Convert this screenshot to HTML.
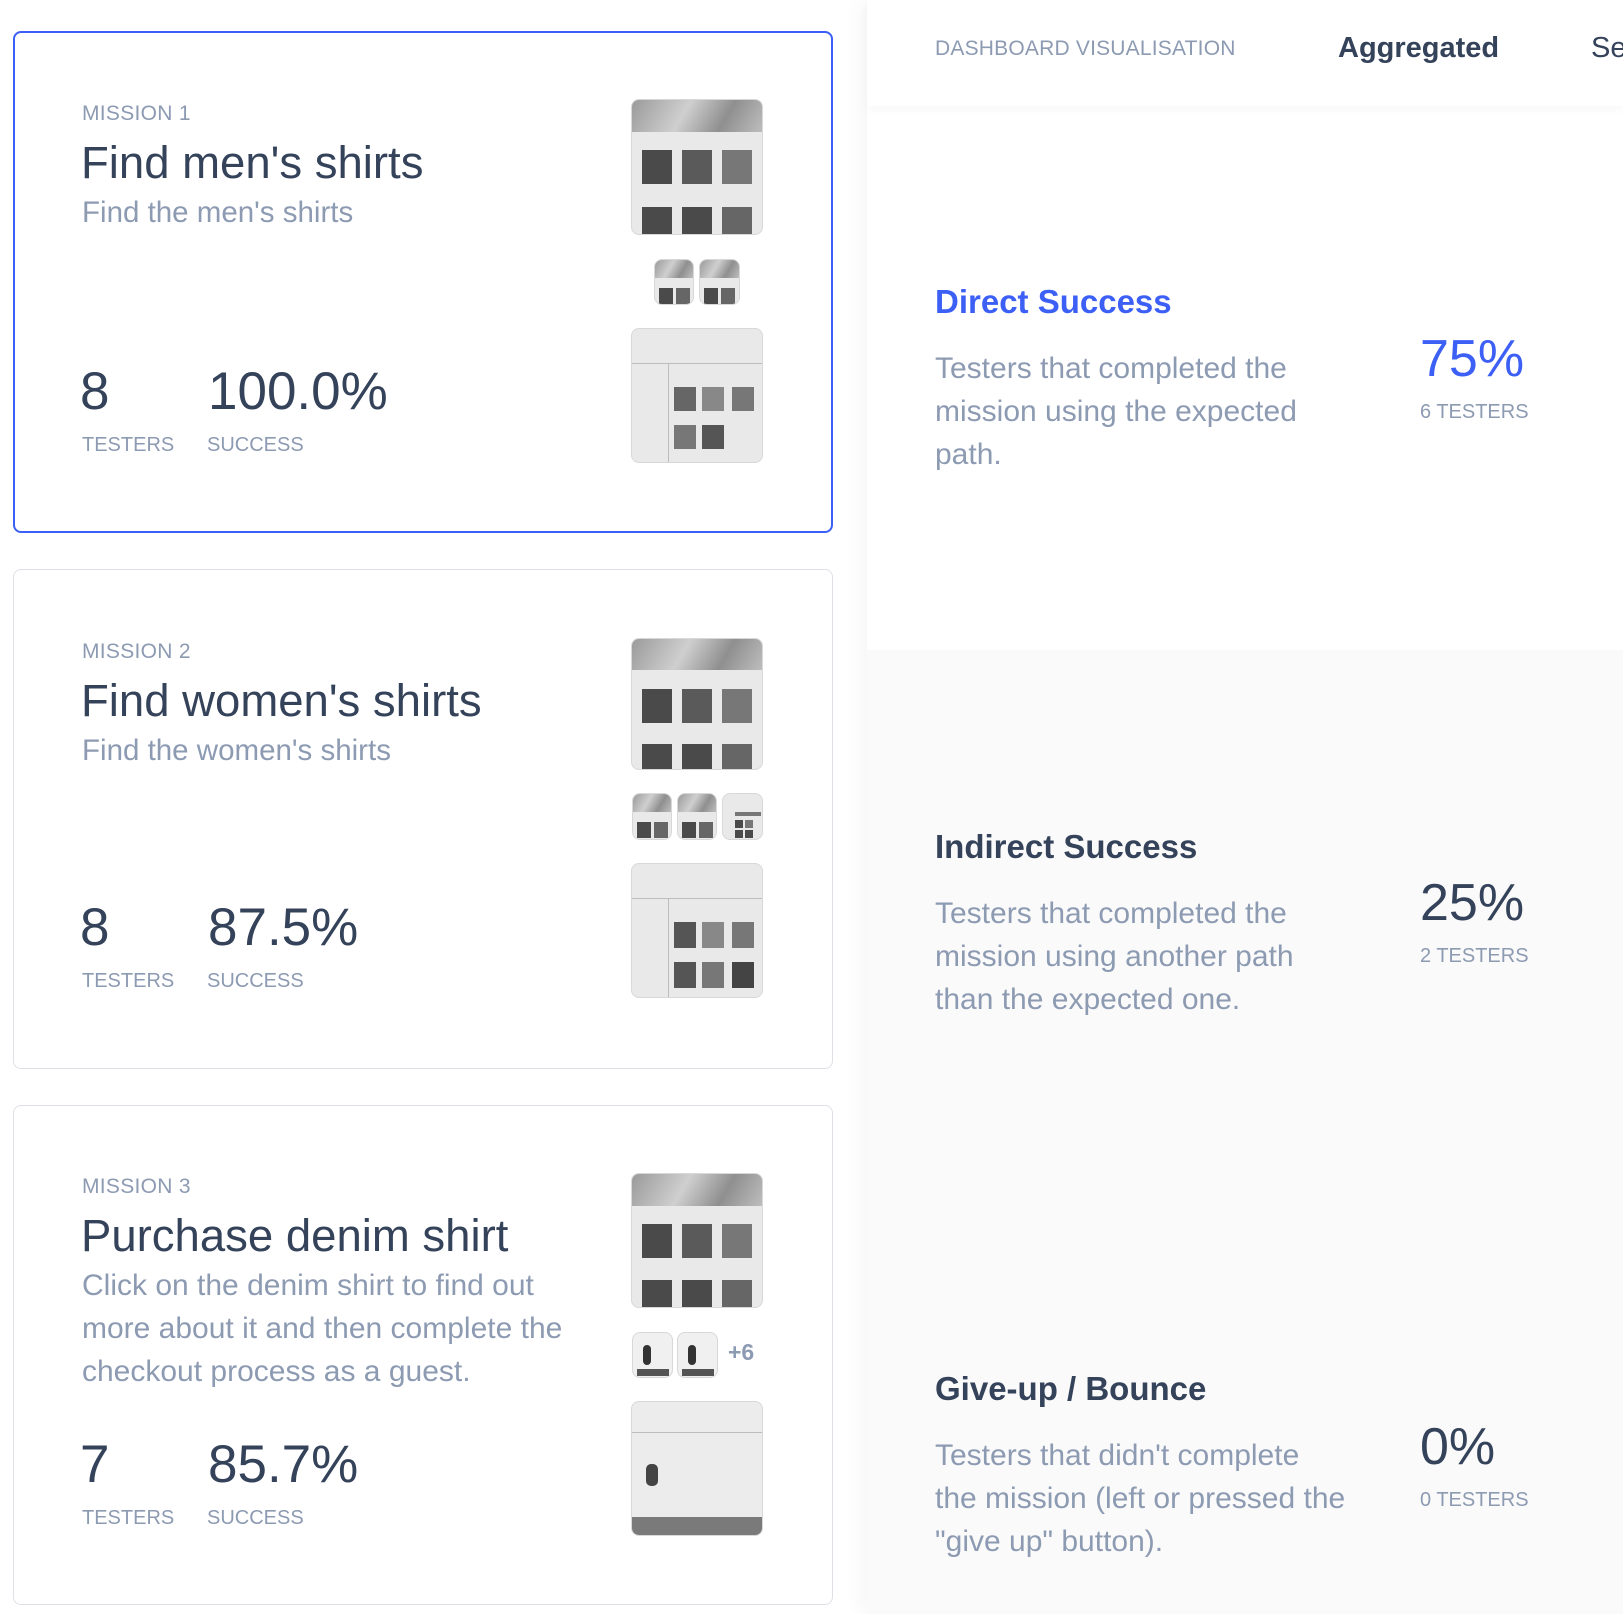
<!DOCTYPE html>
<html><head><meta charset="utf-8"><style>
*{margin:0;padding:0;box-sizing:border-box}
body{width:1623px;height:1614px;overflow:hidden;background:#fff;font-family:"Liberation Sans",sans-serif;position:relative}
.abs{position:absolute;white-space:nowrap;line-height:1}
.card{position:absolute;left:13px;width:820px;border:1.5px solid #dde0e5;border-radius:8px;background:#fff}
.card.sel{border:2px solid #3c5ff5}
.lbl{color:#8c9ab2;font-size:21px;letter-spacing:0.3px}
.ttl{color:#34425a;font-size:45.5px}
.sub{color:#8c9ab2;font-size:29.5px}
.num{color:#34425a;font-size:53px}
.cap{color:#8c9ab2;font-size:20px}
.th{position:absolute;border:1.5px solid #d8d8d8;border-radius:8px;background:#e9e9e9;overflow:hidden}
.ban{position:absolute;left:0;right:0;top:0;height:24%;background:linear-gradient(120deg,#9a9a9a,#cfcfcf 40%,#8f8f8f 70%,#bdbdbd)}
.sq{position:absolute;background:#4a4a4a}
.ln{position:absolute;background:#bdbdbd;height:1px}
.panel{position:absolute;left:867px;top:0;width:756px;height:1614px;background:#fafafa;box-shadow:-8px 0 18px rgba(0,0,0,0.035)}
.h2{color:#34425a;font-size:33px;font-weight:bold}
.desc{color:#8c9ab2;font-size:30px;line-height:43px;white-space:nowrap;position:absolute}
.pct{color:#34425a;font-size:52px}
.tst{color:#8c9ab2;font-size:20px}
</style></head><body>

<div class="card sel" style="top:31px;height:502px"></div>
<div class="card" style="top:569px;height:500px"></div>
<div class="card" style="top:1105px;height:500px"></div>

<!-- card 1 -->
<div class="abs lbl" style="left:82px;top:103px">MISSION 1</div>
<div class="abs ttl" style="left:81px;top:140px">Find men's shirts</div>
<div class="abs sub" style="left:82px;top:198px">Find the men's shirts</div>
<div class="abs num" style="left:80px;top:365px">8</div>
<div class="abs num" style="left:208px;top:365px">100.0%</div>
<div class="abs cap" style="left:82px;top:435px">TESTERS</div>
<div class="abs cap" style="left:207px;top:435px">SUCCESS</div>

<!-- card 2 -->
<div class="abs lbl" style="left:82px;top:641px">MISSION 2</div>
<div class="abs ttl" style="left:81px;top:678px">Find women's shirts</div>
<div class="abs sub" style="left:82px;top:736px">Find the women's shirts</div>
<div class="abs num" style="left:80px;top:901px">8</div>
<div class="abs num" style="left:208px;top:901px">87.5%</div>
<div class="abs cap" style="left:82px;top:971px">TESTERS</div>
<div class="abs cap" style="left:207px;top:971px">SUCCESS</div>

<!-- card 3 -->
<div class="abs lbl" style="left:82px;top:1176px">MISSION 3</div>
<div class="abs ttl" style="left:81px;top:1213px">Purchase denim shirt</div>
<div class="desc" style="left:82px;top:1264px;font-size:30px">Click on the denim shirt to find out<br>more about it and then complete the<br>checkout process as a guest.</div>
<div class="abs num" style="left:80px;top:1438px">7</div>
<div class="abs num" style="left:208px;top:1438px">85.7%</div>
<div class="abs cap" style="left:82px;top:1508px">TESTERS</div>
<div class="abs cap" style="left:207px;top:1508px">SUCCESS</div>

<!-- thumbs -->
<div class="th" style="left:631px;top:99px;width:132px;height:136px"><div class="ban"></div>
<div class="sq" style="left:10px;top:50px;width:30px;height:34px"></div><div class="sq" style="left:50px;top:50px;width:30px;height:34px;background:#5a5a5a"></div><div class="sq" style="left:90px;top:50px;width:30px;height:34px;background:#777"></div>
<div class="sq" style="left:10px;top:107px;width:30px;height:30px"></div><div class="sq" style="left:50px;top:107px;width:30px;height:30px"></div><div class="sq" style="left:90px;top:107px;width:30px;height:30px;background:#666"></div></div>
<div class="th" style="left:654px;top:259px;width:40px;height:46px"><div class="ban" style="height:40%"></div><div class="sq" style="left:4px;top:28px;width:14px;height:16px"></div><div class="sq" style="left:21px;top:28px;width:14px;height:16px;background:#666"></div></div>
<div class="th" style="left:699px;top:259px;width:41px;height:46px"><div class="ban" style="height:40%"></div><div class="sq" style="left:4px;top:28px;width:14px;height:16px"></div><div class="sq" style="left:21px;top:28px;width:14px;height:16px;background:#666"></div></div>
<div class="th" style="left:631px;top:328px;width:132px;height:135px"><div class="ln" style="left:0;right:0;top:34px"></div><div class="ln" style="left:36px;top:34px;width:1px;height:100px"></div>
<div class="sq" style="left:42px;top:58px;width:22px;height:24px;background:#666"></div><div class="sq" style="left:70px;top:58px;width:22px;height:24px;background:#888"></div><div class="sq" style="left:100px;top:58px;width:22px;height:24px;background:#777"></div>
<div class="sq" style="left:42px;top:96px;width:22px;height:24px;background:#777"></div><div class="sq" style="left:70px;top:96px;width:22px;height:24px;background:#555"></div></div>

<div class="th" style="left:631px;top:638px;width:132px;height:132px"><div class="ban"></div>
<div class="sq" style="left:10px;top:50px;width:30px;height:34px"></div><div class="sq" style="left:50px;top:50px;width:30px;height:34px;background:#5a5a5a"></div><div class="sq" style="left:90px;top:50px;width:30px;height:34px;background:#777"></div>
<div class="sq" style="left:10px;top:105px;width:30px;height:30px"></div><div class="sq" style="left:50px;top:105px;width:30px;height:30px"></div><div class="sq" style="left:90px;top:105px;width:30px;height:30px;background:#666"></div></div>
<div class="th" style="left:632px;top:793px;width:40px;height:47px"><div class="ban" style="height:40%"></div><div class="sq" style="left:4px;top:28px;width:14px;height:16px"></div><div class="sq" style="left:21px;top:28px;width:14px;height:16px;background:#666"></div></div>
<div class="th" style="left:677px;top:793px;width:40px;height:47px"><div class="ban" style="height:40%"></div><div class="sq" style="left:4px;top:28px;width:14px;height:16px"></div><div class="sq" style="left:21px;top:28px;width:14px;height:16px;background:#666"></div></div>
<div class="th" style="left:722px;top:793px;width:41px;height:47px"><div class="sq" style="left:12px;top:18px;width:26px;height:4px;background:#777"></div><div class="sq" style="left:12px;top:26px;width:8px;height:8px"></div><div class="sq" style="left:22px;top:26px;width:8px;height:8px;background:#777"></div><div class="sq" style="left:12px;top:36px;width:8px;height:8px"></div><div class="sq" style="left:22px;top:36px;width:8px;height:8px"></div></div>
<div class="th" style="left:631px;top:863px;width:132px;height:135px"><div class="ln" style="left:0;right:0;top:34px"></div><div class="ln" style="left:36px;top:34px;width:1px;height:100px"></div>
<div class="sq" style="left:42px;top:58px;width:22px;height:26px;background:#555"></div><div class="sq" style="left:70px;top:58px;width:22px;height:26px;background:#888"></div><div class="sq" style="left:100px;top:58px;width:22px;height:26px;background:#777"></div>
<div class="sq" style="left:42px;top:98px;width:22px;height:26px;background:#555"></div><div class="sq" style="left:70px;top:98px;width:22px;height:26px;background:#777"></div><div class="sq" style="left:100px;top:98px;width:22px;height:26px;background:#444"></div></div>

<div class="th" style="left:631px;top:1173px;width:132px;height:135px"><div class="ban"></div>
<div class="sq" style="left:10px;top:50px;width:30px;height:34px"></div><div class="sq" style="left:50px;top:50px;width:30px;height:34px;background:#5a5a5a"></div><div class="sq" style="left:90px;top:50px;width:30px;height:34px;background:#777"></div>
<div class="sq" style="left:10px;top:106px;width:30px;height:30px"></div><div class="sq" style="left:50px;top:106px;width:30px;height:30px"></div><div class="sq" style="left:90px;top:106px;width:30px;height:30px;background:#666"></div></div>
<div class="th" style="left:632px;top:1332px;width:41px;height:46px;background:#f0f0f0"><div class="sq" style="left:10px;top:12px;width:8px;height:20px;background:#333;border-radius:4px"></div><div class="sq" style="left:4px;top:36px;width:32px;height:7px;background:#555"></div></div>
<div class="th" style="left:677px;top:1332px;width:41px;height:46px;background:#f0f0f0"><div class="sq" style="left:10px;top:12px;width:8px;height:20px;background:#333;border-radius:4px"></div><div class="sq" style="left:4px;top:36px;width:32px;height:7px;background:#555"></div></div>
<div class="abs" style="left:728px;top:1341px;font-size:23px;font-weight:bold;color:#8c9ab2">+6</div>
<div class="th" style="left:631px;top:1401px;width:132px;height:135px;background:#ececec"><div class="ln" style="left:0;right:0;top:30px"></div><div class="sq" style="left:14px;top:62px;width:12px;height:22px;background:#444;border-radius:5px"></div><div class="sq" style="left:0;right:0;bottom:0;height:18px;background:#7a7a7a"></div></div>

<!-- right panel -->
<div class="panel"></div>
<div style="position:absolute;left:867px;top:0;width:756px;height:650px;background:#fff"></div>
<div style="position:absolute;left:867px;top:0;width:756px;height:106px;background:#fff;box-shadow:0 4px 10px rgba(0,0,0,0.03)"></div>
<div class="abs" style="left:935px;top:38px;font-size:21px;color:#8c9ab2;letter-spacing:0.2px">DASHBOARD VISUALISATION</div>
<div class="abs" style="left:1338px;top:34px;font-size:29px;font-weight:bold;color:#34425a">Aggregated</div>
<div class="abs" style="left:1591px;top:34px;font-size:29px;color:#34425a">Se</div>

<div class="abs h2" style="left:935px;top:285px;color:#3c5ff5">Direct Success</div>
<div class="desc" style="left:935px;top:347px">Testers that completed the<br>mission using the expected<br>path.</div>
<div class="abs pct" style="left:1420px;top:333px;color:#3c5ff5">75%</div>
<div class="abs tst" style="left:1420px;top:402px">6 TESTERS</div>

<div class="abs h2" style="left:935px;top:830px">Indirect Success</div>
<div class="desc" style="left:935px;top:892px">Testers that completed the<br>mission using another path<br>than the expected one.</div>
<div class="abs pct" style="left:1420px;top:877px">25%</div>
<div class="abs tst" style="left:1420px;top:946px">2 TESTERS</div>

<div class="abs h2" style="left:935px;top:1372px">Give-up / Bounce</div>
<div class="desc" style="left:935px;top:1434px">Testers that didn't complete<br>the mission (left or pressed the<br>"give up" button).</div>
<div class="abs pct" style="left:1420px;top:1421px">0%</div>
<div class="abs tst" style="left:1420px;top:1490px">0 TESTERS</div>
</body></html>
